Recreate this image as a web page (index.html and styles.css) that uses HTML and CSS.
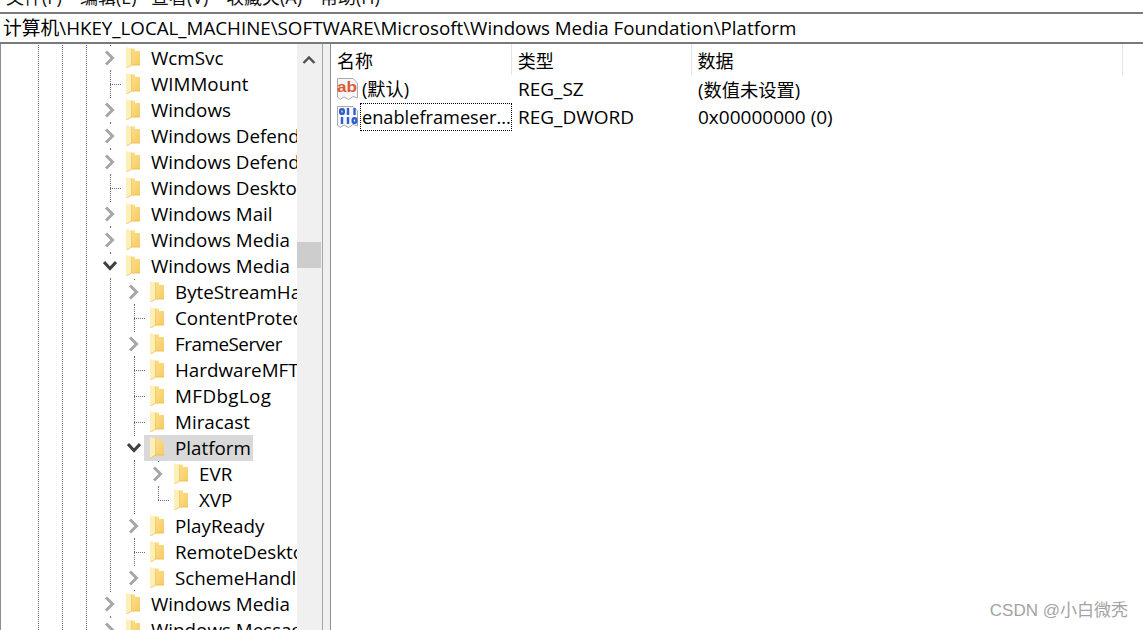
FILE: index.html
```html
<!DOCTYPE html>
<html lang="zh">
<head>
<meta charset="utf-8">
<title>注册表编辑器</title>
<link rel="stylesheet" href="styles.css">
</head>
<body>
<svg class="defs" width="0" height="0" aria-hidden="true">
  <defs>
    <linearGradient id="fg" x1="0" y1="0" x2="1" y2="1">
      <stop offset="0" stop-color="#fbe08f"/>
      <stop offset="1" stop-color="#f6cc63"/>
    </linearGradient>
    <symbol id="folder" viewBox="0 0 14 22">
      <path d="M4 1.500H9V4H14V18H4Z" fill="url(#fg)"/>
      <path d="M0 0L5 1.500V18L0 21Z" fill="#feeeb8"/>
      <path d="M5 1.500V18L0 21H1.500L5.500 18.500H14V17.500H5.500V1.500Z" fill="#eec05a"/>
    </symbol>
    <symbol id="chev-r" viewBox="0 0 12 16">
      <path d="M2 1.500L8.500 8L2 14.500" fill="none" stroke="#a6a6a6" stroke-width="3"/>
    </symbol>
    <symbol id="chev-d" viewBox="0 0 14 12">
      <path d="M1 2L7 8.500L13 2" fill="none" stroke="#404040" stroke-width="3"/>
    </symbol>
  </defs>
</svg>
<div class="window">
  <div class="menubar">
    <span class="menu m1">文件(F)</span>
    <span class="menu m2">编辑(E)</span>
    <span class="menu m3">查看(V)</span>
    <span class="menu m4">收藏夹(A)</span>
    <span class="menu m5">帮助(H)</span>
  </div>
  <div class="address">计算机\HKEY_LOCAL_MACHINE\SOFTWARE\Microsoft\Windows Media Foundation\Platform</div>
  <div class="panes">
    <div class="treepane">
      <div class="tree">
        <div class="row"><i class="g"></i><i class="g"></i><i class="g"></i><i class="x"><svg class="cr"><use href="#chev-r"/></svg></i><svg class="fd"><use href="#folder"/></svg><span class="lbl">WcmSvc</span></div>
        <div class="row"><i class="g"></i><i class="g"></i><i class="g"></i><i class="t"></i><svg class="fd"><use href="#folder"/></svg><span class="lbl">WIMMount</span></div>
        <div class="row"><i class="g"></i><i class="g"></i><i class="g"></i><i class="x"><svg class="cr"><use href="#chev-r"/></svg></i><svg class="fd"><use href="#folder"/></svg><span class="lbl">Windows</span></div>
        <div class="row"><i class="g"></i><i class="g"></i><i class="g"></i><i class="x"><svg class="cr"><use href="#chev-r"/></svg></i><svg class="fd"><use href="#folder"/></svg><span class="lbl">Windows Defend</span></div>
        <div class="row"><i class="g"></i><i class="g"></i><i class="g"></i><i class="x"><svg class="cr"><use href="#chev-r"/></svg></i><svg class="fd"><use href="#folder"/></svg><span class="lbl">Windows Defend</span></div>
        <div class="row"><i class="g"></i><i class="g"></i><i class="g"></i><i class="t"></i><svg class="fd"><use href="#folder"/></svg><span class="lbl">Windows Deskto</span></div>
        <div class="row"><i class="g"></i><i class="g"></i><i class="g"></i><i class="x"><svg class="cr"><use href="#chev-r"/></svg></i><svg class="fd"><use href="#folder"/></svg><span class="lbl">Windows Mail</span></div>
        <div class="row"><i class="g"></i><i class="g"></i><i class="g"></i><i class="x"><svg class="cr"><use href="#chev-r"/></svg></i><svg class="fd"><use href="#folder"/></svg><span class="lbl">Windows Media</span></div>
        <div class="row"><i class="g"></i><i class="g"></i><i class="g"></i><i class="x"><svg class="cd"><use href="#chev-d"/></svg></i><svg class="fd"><use href="#folder"/></svg><span class="lbl">Windows Media</span></div>
        <div class="row"><i class="g"></i><i class="g"></i><i class="g"></i><i class="g"></i><i class="x"><svg class="cr"><use href="#chev-r"/></svg></i><svg class="fd"><use href="#folder"/></svg><span class="lbl">ByteStreamHa</span></div>
        <div class="row"><i class="g"></i><i class="g"></i><i class="g"></i><i class="g"></i><i class="t"></i><svg class="fd"><use href="#folder"/></svg><span class="lbl">ContentProtec</span></div>
        <div class="row"><i class="g"></i><i class="g"></i><i class="g"></i><i class="g"></i><i class="x"><svg class="cr"><use href="#chev-r"/></svg></i><svg class="fd"><use href="#folder"/></svg><span class="lbl tight">FrameServer</span></div>
        <div class="row"><i class="g"></i><i class="g"></i><i class="g"></i><i class="g"></i><i class="t"></i><svg class="fd"><use href="#folder"/></svg><span class="lbl">HardwareMFT</span></div>
        <div class="row"><i class="g"></i><i class="g"></i><i class="g"></i><i class="g"></i><i class="t"></i><svg class="fd"><use href="#folder"/></svg><span class="lbl loose">MFDbgLog</span></div>
        <div class="row"><i class="g"></i><i class="g"></i><i class="g"></i><i class="g"></i><i class="t"></i><svg class="fd"><use href="#folder"/></svg><span class="lbl">Miracast</span></div>
        <div class="row"><i class="g"></i><i class="g"></i><i class="g"></i><i class="g"></i><i class="x"><svg class="cd"><use href="#chev-d"/></svg></i><span class="sel"><svg class="fd"><use href="#folder"/></svg><span class="lbl">Platform</span></span></div>
        <div class="row"><i class="g"></i><i class="g"></i><i class="g"></i><i class="g"></i><i class="g"></i><i class="x"><svg class="cr"><use href="#chev-r"/></svg></i><svg class="fd"><use href="#folder"/></svg><span class="lbl">EVR</span></div>
        <div class="row"><i class="g"></i><i class="g"></i><i class="g"></i><i class="g"></i><i class="g"></i><i class="l"></i><svg class="fd"><use href="#folder"/></svg><span class="lbl">XVP</span></div>
        <div class="row"><i class="g"></i><i class="g"></i><i class="g"></i><i class="g"></i><i class="x"><svg class="cr"><use href="#chev-r"/></svg></i><svg class="fd"><use href="#folder"/></svg><span class="lbl">PlayReady</span></div>
        <div class="row"><i class="g"></i><i class="g"></i><i class="g"></i><i class="g"></i><i class="t"></i><svg class="fd"><use href="#folder"/></svg><span class="lbl">RemoteDeskto</span></div>
        <div class="row"><i class="g"></i><i class="g"></i><i class="g"></i><i class="g"></i><i class="x"><svg class="cr"><use href="#chev-r"/></svg></i><svg class="fd"><use href="#folder"/></svg><span class="lbl">SchemeHandl</span></div>
        <div class="row"><i class="g"></i><i class="g"></i><i class="g"></i><i class="x"><svg class="cr"><use href="#chev-r"/></svg></i><svg class="fd"><use href="#folder"/></svg><span class="lbl">Windows Media</span></div>
        <div class="row"><i class="g"></i><i class="g"></i><i class="g"></i><i class="x"><svg class="cr"><use href="#chev-r"/></svg></i><svg class="fd"><use href="#folder"/></svg><span class="lbl">Windows Messag</span></div>
      </div>
      <div class="scrollbar">
        <svg class="up" viewBox="0 0 14 10" width="14" height="10"><path d="M1.500 8L7 2.500L12.500 8" fill="none" stroke="#505050" stroke-width="2.400"/></svg>
        <div class="thumb"></div>
      </div>
    </div>
    <div class="split"></div>
    <div class="list">
      <div class="lhead">
        <span class="hc c1">名称</span>
        <span class="hc c2">类型</span>
        <span class="hc c3">数据</span>
        <span class="hc c4"></span>
      </div>
      <div class="lrow">
        <span class="cell c1">
          <svg class="ico" viewBox="0 0 24 24" width="24" height="24">
            <path d="M1.500 1.500H17L21.500 6V21L17 19.500L12.500 22.500L8 20L4 22.500L1.500 20Z" fill="#f6f6f6" stroke="#ababab"/>
            <text x="1" y="15" textLength="20" lengthAdjust="spacingAndGlyphs" class="abtxt">ab</text>
          </svg>
          <span class="nm">(默认)</span>
        </span>
        <span class="cell c2">REG_SZ</span>
        <span class="cell c3 cjk">(数值未设置)</span>
      </div>
      <div class="lrow">
        <span class="cell c1">
          <svg class="ico" viewBox="0 0 24 24" width="24" height="24">
            <path d="M1.500 1.500H17L21.500 6V21L17 19.500L12.500 22.500L8 20L4 22.500L1.500 20Z" fill="#f6f6f6" stroke="#ababab"/>
            <g fill="none" stroke="#2f5fd0" stroke-width="2.400">
              <rect x="4.200" y="4.200" width="3.600" height="4.600" rx="1.600"/>
              <path d="M12 3V10M18.500 3V10"/>
              <path d="M6 12V19M12 12V19"/>
              <rect x="16.700" y="13.200" width="3.600" height="4.600" rx="1.600"/>
            </g>
          </svg>
          <span class="nm focus">enableframeser...</span>
        </span>
        <span class="cell c2">REG_DWORD</span>
        <span class="cell c3">0x00000000 (0)</span>
      </div>
    </div>
  </div>
  <div class="mark">CSDN @小白微秃</div>
</div>
</body>
</html>
```
FILE: styles.css
```css
* { box-sizing: border-box; }
html, body { margin: 0; height: 100%; overflow: hidden; background: #fff; }
body { font-family: "Open Sans", "Noto Sans CJK SC", sans-serif; color: #000; }
.defs { position: absolute; }
.window { position: relative; width: 1143px; height: 630px; display: flex; flex-direction: column; overflow: hidden; }

.menubar { height: 14px; flex: none; display: flex; align-items: flex-end; border-bottom: 2px solid #7a7a7a; background: #fff; overflow: hidden; font-size: 18px; color: #111; }
.menu { line-height: 26px; height: 26px; flex: none; margin-bottom: 2px; }
.m1 { margin-left: 6px; width: 74px; }
.m2 { width: 71px; }
.m3 { width: 75px; }
.m4 { width: 94px; }

.address { height: 30px; flex: none; padding-left: 3px; border-bottom: 2px solid #7a7a7a; font-size: 18.750px; line-height: 28px; white-space: nowrap; overflow: hidden; }

.panes { flex: 1; display: flex; min-height: 0; }
.treepane { width: 323px; flex: none; display: flex; border-left: 1px solid #8a9097; }
.tree { width: 296px; flex: none; overflow: hidden; padding-left: 25px; padding-top: 1px; }
.row { height: 26px; display: flex; align-items: center; white-space: nowrap; }
.row i { width: 24px; height: 26px; flex: none; display: flex; align-items: center; justify-content: center; }
.g { background: repeating-linear-gradient(to bottom, #707070 0 1px, transparent 1px 2px) center / 1px 100% no-repeat; }
.t { background:
  repeating-linear-gradient(to bottom, #707070 0 1px, transparent 1px 2px) 11.500px 0 / 1px 100% no-repeat,
  repeating-linear-gradient(to right, #707070 0 1px, transparent 1px 2px) right 0 top 13px / 12px 1px no-repeat; }
.l { background:
  repeating-linear-gradient(to bottom, #707070 0 1px, transparent 1px 2px) 11.500px 0 / 1px 14px no-repeat,
  repeating-linear-gradient(to right, #707070 0 1px, transparent 1px 2px) right 0 top 13px / 12px 1px no-repeat; }
.x { background:
  linear-gradient(#707070, #707070) 11.500px 0 / 1px 1px no-repeat,
  linear-gradient(#707070, #707070) 11.500px 100% / 1px 1px no-repeat; }
.cr { width: 12px; height: 16px; }
.cd { width: 14px; height: 12px; }
.fd { width: 14px; height: 22px; margin-left: 4px; flex: none; }
.lbl { margin-left: 11px; font-size: 18.800px; line-height: 26px; }
.tight { letter-spacing: -0.450px; }
.loose { letter-spacing: 0.400px; }
.sel { display: flex; align-items: center; height: 26px; background: #d9d9d9; padding-right: 2px; margin-left: -2px; }
.sel .fd { margin-left: 6px; }

.scrollbar { width: 26px; flex: none; background: #f0f0f0; display: flex; flex-direction: column; align-items: center; padding-top: 11px; border-right: 1px solid #a6a6a6; }
.up { flex: none; margin-right: 2px; }
.thumb { width: 24px; height: 26px; margin-top: 177px; margin-right: 1px; background: #cdcdcd; }
.split { width: 8px; flex: none; background: #f0f0f0; border-right: 1px solid #8a9097; }

.list { flex: 1; min-width: 0; }
.lhead { height: 31px; display: flex; }
.hc { display: flex; align-items: center; font-size: 18px; border-right: 1px solid #e5e5e5; padding-left: 6px; height: 31px; }
.c1 { width: 181px; }
.c2 { width: 180px; }
.c3 { width: 432px; }
.c4 { width: 20px; border-right: none; }
.lrow { height: 28px; display: flex; align-items: center; font-size: 19px; white-space: nowrap; }
.cell { display: flex; align-items: center; height: 28px; padding-left: 6px; }
.cell.c1 { padding-left: 5px; }
.cjk { font-size: 18.300px; }
.ico { flex: none; }
.nm { height: 28px; line-height: 28px; flex: 1; padding-left: 2px; font-size: 18.200px; }
.focus { outline: 1px dotted #000; outline-offset: -1px; }
.abtxt { font-family: "Liberation Sans", sans-serif; font-weight: 700; font-size: 15px; fill: #dc5a36; }

.mark { position: absolute; right: 15px; top: 600px; font-size: 17px; line-height: 22px; color: #a3a3a3; font-family: "Liberation Sans", "Noto Sans CJK SC", sans-serif; }
```
